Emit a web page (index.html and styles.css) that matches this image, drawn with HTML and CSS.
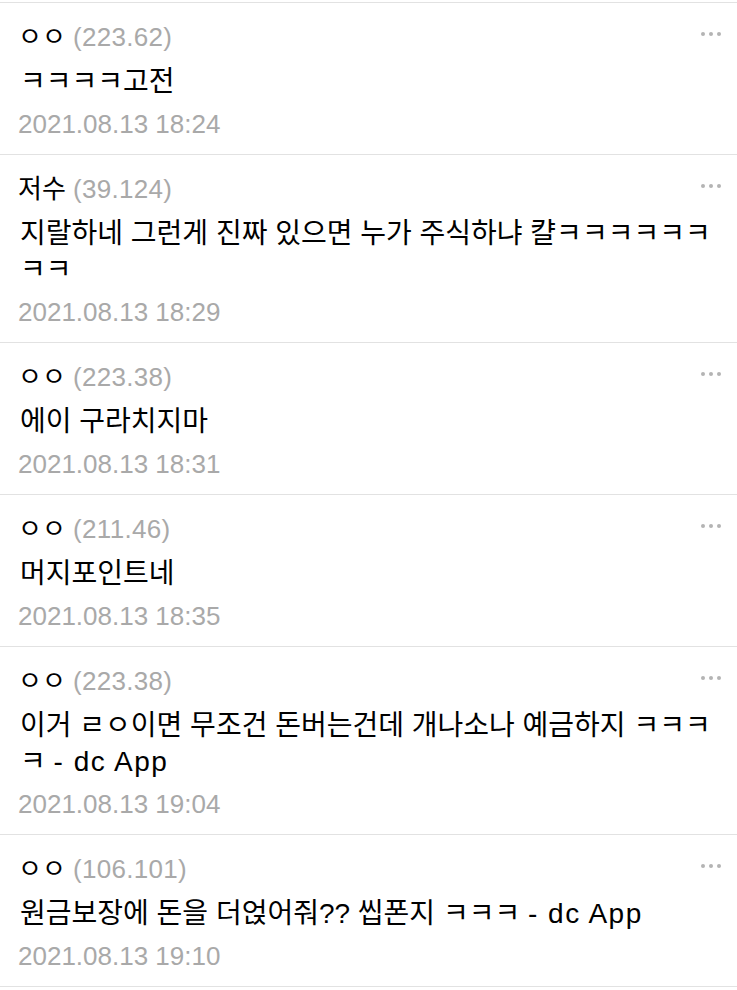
FILE: index.html
```html
<!DOCTYPE html>
<html lang="ko">
<head>
  <meta charset="UTF-8" />
  <meta name="viewport" content="width=device-width, initial-scale=1.0"/>
  <title>댓글</title>
  <link rel="stylesheet" href="styles.css">
</head>
<body>

  <ul class="comment-list">
    <li class="comment">
      <div class="comment-head">
        <span class="nick">ㅇㅇ <span class="ip">(223.62)</span></span>
        <span class="more"><i></i><i></i><i></i></span>
      </div>
      <p class="comment-text">ㅋㅋㅋㅋ고전</p>
      <p class="comment-date">2021.08.13 18:24</p>
    </li>

    <li class="comment">
      <div class="comment-head">
        <span class="nick">저수 <span class="ip">(39.124)</span></span>
        <span class="more"><i></i><i></i><i></i></span>
      </div>
      <p class="comment-text">지랄하네 그런게 진짜 있으면 누가 주식하냐 캴ㅋㅋㅋㅋㅋㅋㅋㅋ</p>
      <p class="comment-date">2021.08.13 18:29</p>
    </li>

    <li class="comment">
      <div class="comment-head">
        <span class="nick">ㅇㅇ <span class="ip">(223.38)</span></span>
        <span class="more"><i></i><i></i><i></i></span>
      </div>
      <p class="comment-text">에이 구라치지마</p>
      <p class="comment-date">2021.08.13 18:31</p>
    </li>

    <li class="comment">
      <div class="comment-head">
        <span class="nick">ㅇㅇ <span class="ip">(211.46)</span></span>
        <span class="more"><i></i><i></i><i></i></span>
      </div>
      <p class="comment-text">머지포인트네</p>
      <p class="comment-date">2021.08.13 18:35</p>
    </li>

    <li class="comment">
      <div class="comment-head">
        <span class="nick">ㅇㅇ <span class="ip">(223.38)</span></span>
        <span class="more"><i></i><i></i><i></i></span>
      </div>
      <p class="comment-text">이거 ㄹㅇ이면 무조건 돈버는건데 개나소나 예금하지 ㅋㅋㅋㅋ <span class="app-sig">- dc App</span></p>
      <p class="comment-date">2021.08.13 19:04</p>
    </li>

    <li class="comment">
      <div class="comment-head">
        <span class="nick">ㅇㅇ <span class="ip">(106.101)</span></span>
        <span class="more"><i></i><i></i><i></i></span>
      </div>
      <p class="comment-text">원금보장에 돈을 더얹어줘?? 씹폰지 ㅋㅋㅋ <span class="app-sig">- dc App</span></p>
      <p class="comment-date">2021.08.13 19:10</p>
    </li>
  </ul>

</body>
</html>
```

FILE: styles.css
```css
body {
  margin: 0;
  background: #fff;
  color: #000;
  font-family: "Liberation Sans", "Noto Sans CJK KR", sans-serif;
}

.comment-list {
  list-style: none;
  margin: 0;
  padding: 2px 0 0;
}

.comment {
  border-top: 1px solid #e2e2e2;
  padding: 16px 16px 12px 18px;
}
.comment:last-child {
  border-bottom: 1px solid #e2e2e2;
}

.comment-head {
  display: flex;
  justify-content: space-between;
  align-items: center;
  height: 36px;
}
.nick {
  font-size: 26px;
  line-height: 36px;
}
.ip {
  color: #a9a9a9;
  letter-spacing: 0.3px;
}

/* ... button */
.more {
  display: flex;
  gap: 4px;
  margin-top: -7px;
}
.more i {
  width: 4px;
  height: 4px;
  border-radius: 50%;
  background: #b4b4b4;
}

.comment-text {
  margin: 9px 0 0 2px;
  font-size: 28px;
  line-height: 36px;
}
.app-sig {
  letter-spacing: 1.5px;
}
.comment-date {
  margin: 6px 0 0;
  font-size: 26px;
  line-height: 36px;
  color: #a9a9a9;
}
```
